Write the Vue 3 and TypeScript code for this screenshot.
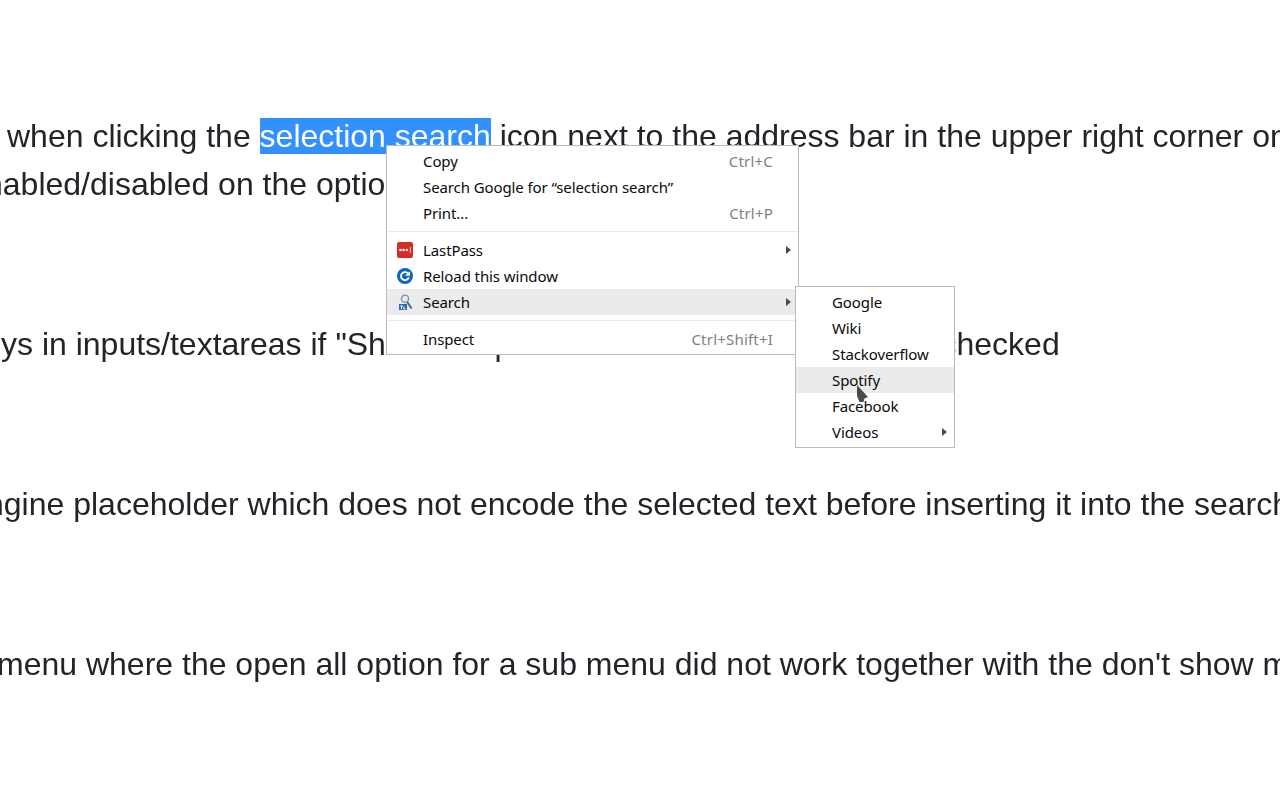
<script setup lang="ts">
interface Item { label?: string; shortcut?: string; icon?: string; arrow?: boolean; active?: boolean; sep?: boolean }
const main: Item[] = [
  { label: 'Copy', shortcut: 'Ctrl+C' },
  { label: 'Search Google for “selection search”' },
  { label: 'Print...', shortcut: 'Ctrl+P' },
  { sep: true },
  { label: 'LastPass', icon: 'lastpass', arrow: true },
  { label: 'Reload this window', icon: 'reload' },
  { label: 'Search', icon: 'search', arrow: true, active: true },
  { sep: true },
  { label: 'Inspect', shortcut: 'Ctrl+Shift+I' },
]
const sub: Item[] = [
  { label: 'Google' },
  { label: 'Wiki' },
  { label: 'Stackoverflow' },
  { label: 'Spotify', active: true },
  { label: 'Facebook' },
  { label: 'Videos', arrow: true },
]
</script>

<template>
  <div class="page">
    <div class="article">
      <p class="para">
        <span class="line l1">when clicking the <span class="sel">selection search</span> icon next to the address bar in the upper right corner on</span>
        <span class="line l2">nabled/disabled on the options page</span>
      </p>
      <p class="para"><span class="line l3">ys in inputs/textareas if "Show in inputs<span class="tight"> and textareas" option</span> is unchecked</span></p>
      <p class="para"><span class="line l4">ngine placeholder which does not encode the selected text before inserting it into the search</span></p>
      <p class="para"><span class="line l5">menu where the open all option for a sub menu did not work together with the don't show m</span></p>
    </div>

    <div class="menu main-menu">
      <template v-for="(it, i) in main" :key="i">
        <div v-if="it.sep" class="sep"></div>
        <div v-else class="row" :class="{ active: it.active }">
          <span class="ico">
            <svg v-if="it.icon === 'lastpass'" class="svg" width="16" height="16" viewBox="0 0 16 16">
              <rect width="16" height="16" rx="2" fill="#d32d27" />
              <circle cx="3.5" cy="8" r="1.3" fill="#fff" />
              <circle cx="6.7" cy="8" r="1.3" fill="#fff" />
              <circle cx="9.9" cy="8" r="1.3" fill="#fff" />
              <rect x="12.8" y="5" width="1" height="6" fill="#f3c4c2" />
            </svg>
            <svg v-else-if="it.icon === 'reload'" class="svg" width="16" height="16" viewBox="0 0 16 16">
              <circle cx="8" cy="8" r="8" fill="#0b66c3" />
              <path d="M11.8 9.4A4 4 0 1 1 10.8 5.2" fill="none" stroke="#fff" stroke-width="1.9" />
              <path d="M8 7.8h5V3.2z" fill="#fff" />
            </svg>
            <svg v-else-if="it.icon === 'search'" class="svg" width="16" height="16" viewBox="0 0 16 16">
              <circle cx="8" cy="4.8" r="3.6" fill="#e4eaf1" stroke="#7f8fa3" stroke-width="1.3" />
              <path d="M10.2 8l4.4 6.5" stroke="#5d6a78" stroke-width="2.2" />
              <rect x="2" y="10" width="8" height="6" fill="#2a6db5" />
              <path d="M3.2 12h2.6M4.5 12v3M6.8 12.5v2.5h1.6" stroke="#fff" stroke-width="1" fill="none" />
            </svg>
          </span>
          <span class="label">{{ it.label }}</span>
          <span v-if="it.shortcut" class="shortcut">{{ it.shortcut }}</span>
          <span v-if="it.arrow" class="arrow"></span>
        </div>
      </template>
    </div>

    <div class="menu sub-menu">
      <div v-for="it in sub" :key="it.label" class="row" :class="{ active: it.active }">
        <span class="label">{{ it.label }}</span>
        <span v-if="it.arrow" class="arrow"></span>
      </div>
    </div>

    <svg class="cursor" width="14" height="20" viewBox="0 0 14 20">
      <path d="M0 0L11 12L7.5 13.5L6.5 17L2.5 17L0 11z" fill="#4a4a4a" />
    </svg>
  </div>
</template>

<style>
html, body { margin: 0; background: #fff; }
</style>

<style scoped>
.page {
  position: relative;
  width: 1280px;
  height: 800px;
  overflow: hidden;
  background: #fff;
  padding-top: 112px;
  box-sizing: border-box;
  font-family: "Liberation Sans", Arial, sans-serif;
  font-size: 32px;
  line-height: 48px;
  color: #212529;
}
.article { will-change: transform; }
.para { margin: 0 0 112px; }
.line { display: block; white-space: nowrap; }
.l1 { margin-left: 7px; }
.l2 { margin-left: -15px; }
.l3 { margin-left: 1px; }
.l4 { margin-left: -14px; }
.l5 { margin-left: -3px; }
.tight { letter-spacing: -0.05px; }
.sel { background: #3390ff; color: #fff; }
.menu {
  position: absolute;
  box-sizing: border-box;
  background: #fff;
  border: 1px solid #bababa;
  padding: 2px 0;
  font-family: "Noto Sans", sans-serif;
  font-size: 15px;
  line-height: 26px;
  color: #0a0a0a;
}
.main-menu { left: 386px; top: 145px; width: 413px; height: 210px; }
.sub-menu { left: 795px; top: 286px; width: 160px; height: 162px; }
.row {
  position: relative;
  display: flex;
  align-items: center;
  height: 26px;
  padding-left: 36px;
}
.row.active { background: #ebebeb; }
.ico { position: absolute; left: 10px; top: 5px; width: 16px; height: 16px; }
.svg { display: block; }
.label { flex: 1; letter-spacing: -0.1px; }
.shortcut { color: #7f7f7f; margin-right: 25px; letter-spacing: 0.2px; }
.arrow {
  position: absolute;
  right: 7px;
  top: 9px;
  width: 0;
  height: 0;
  border-left: 5px solid #4a4a4a;
  border-top: 4px solid transparent;
  border-bottom: 4px solid transparent;
}
.sep { height: 1px; background: #e9e9e9; margin: 5px 0; }
.cursor { position: absolute; left: 857px; top: 385px; }
</style>
